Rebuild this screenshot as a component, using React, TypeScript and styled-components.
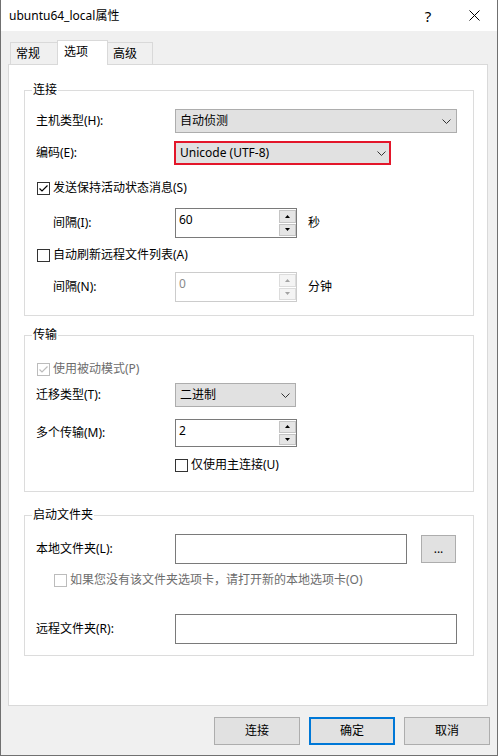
import { FC, ReactNode } from "react";
import styled, { createGlobalStyle } from "styled-components";

const GlobalStyle = createGlobalStyle`
  html, body {
    margin: 0;
    padding: 0;
    background: #f0f0f0;
  }
  body {
    font-family: "Noto Sans", "Noto Sans CJK SC", sans-serif;
    font-size: 12px;
    line-height: 16px;
    color: #000;
  }
  * {
    box-sizing: border-box;
  }
`;

const Chevron = () => (
  <svg width="9" height="5" viewBox="0 0 9 5">
    <polyline points="0.5,0.5 4.5,4.5 8.5,0.5" fill="none" stroke="#333" strokeWidth="1" />
  </svg>
);

const Arrow: FC<{ up?: boolean; disabled?: boolean }> = ({ up, disabled }) => (
  <svg width="5" height="3" viewBox="0 0 5 3">
    <polygon
      points={up ? "0,3 2.5,0 5,3" : "0,0 5,0 2.5,3"}
      fill={disabled ? "#a3a3a3" : "#000"}
    />
  </svg>
);

const Check: FC<{ checked?: boolean; disabled?: boolean }> = ({
  checked,
  disabled,
}) => (
  <CheckBox $disabled={disabled}>
    {checked && (
      <svg width="11" height="11" viewBox="0 0 11 11">
        <polyline
          points="1.5,5.5 4,8 9.5,2.5"
          fill="none"
          stroke={disabled ? "#bcbcbc" : "#000"}
          strokeWidth="1.2"
        />
      </svg>
    )}
  </CheckBox>
);

const Spin: FC<{ value: string; disabled?: boolean }> = ({ value, disabled }) => (
  <SpinBox $disabled={disabled}>
    <SpinValue $disabled={disabled}>{value}</SpinValue>
    <SpinButtons>
      <SpinButton $disabled={disabled}>
        <Arrow up disabled={disabled} />
      </SpinButton>
      <SpinButton $disabled={disabled}>
        <Arrow disabled={disabled} />
      </SpinButton>
    </SpinButtons>
  </SpinBox>
);

const Combo: FC<{ width: number; highlight?: boolean; children: ReactNode }> = ({
  width,
  highlight,
  children,
}) => (
  <Select $width={width} $highlight={highlight}>
    <span>{children}</span>
    <Chevron />
  </Select>
);

export default function App() {
  return (
    <>
      <GlobalStyle />
      <Window>
        <TitleBar>
          <TitleText>ubuntu64_local属性</TitleText>
          <CaptionButton>?</CaptionButton>
          <CaptionButton>
            <svg width="11" height="11" viewBox="0 0 11 11">
              <path d="M0.5,0.5 L10.5,10.5 M10.5,0.5 L0.5,10.5" stroke="#000" strokeWidth="1" />
            </svg>
          </CaptionButton>
        </TitleBar>

        <Body>
          <TabStrip>
            <Tab $width={48}>常规</Tab>
            <Tab $width={51} $active>
              选项
            </Tab>
            <Tab $width={46}>高级</Tab>
          </TabStrip>

          <Panel>
            <Group $mt={25} $pb={13}>
              <GroupTitle>连接</GroupTitle>
              <Row $mt={18} $h={24}>
                <Label>主机类型(H):</Label>
                <Combo width={282}>自动侦测</Combo>
              </Row>
              <Row $mt={8} $h={24}>
                <Label>编码(E):</Label>
                <Combo width={217} highlight>
                  Unicode (UTF-8)
                </Combo>
              </Row>
              <CheckRow $mt={13} $indent={1}>
                <Check checked />
                <CheckText>发送保持活动状态消息(S)</CheckText>
              </CheckRow>
              <Row $mt={10} $h={30}>
                <Label $indent={17}>间隔(I):</Label>
                <Spin value="60" />
                <Unit>秒</Unit>
              </Row>
              <CheckRow $mt={7} $indent={1}>
                <Check />
                <CheckText>自动刷新远程文件列表(A)</CheckText>
              </CheckRow>
              <Row $mt={7} $h={30}>
                <Label $indent={17}>间隔(N):</Label>
                <Spin value="0" disabled />
                <Unit>分钟</Unit>
              </Row>
            </Group>

            <Group $mt={19} $pb={16}>
              <GroupTitle>传输</GroupTitle>
              <CheckRow $mt={23} $indent={1}>
                <Check checked disabled />
                <CheckText $disabled>使用被动模式(P)</CheckText>
              </CheckRow>
              <Row $mt={4} $h={24}>
                <Label>迁移类型(T):</Label>
                <Combo width={121}>二进制</Combo>
              </Row>
              <Row $mt={12} $h={28}>
                <Label>多个传输(M):</Label>
                <Spin value="2" />
              </Row>
              <CheckRow $mt={8} $indent={139}>
                <Check />
                <CheckText>仅使用主连接(U)</CheckText>
              </CheckRow>
            </Group>

            <Group $mt={23} $pb={11}>
              <GroupTitle>启动文件夹</GroupTitle>
              <Row $mt={18} $h={30}>
                <Label>本地文件夹(L):</Label>
                <TextBox $width={232} />
                <BrowseButton>...</BrowseButton>
              </Row>
              <CheckRow $mt={6} $indent={18}>
                <Check disabled />
                <CheckText $disabled>如果您没有该文件夹选项卡，请打开新的本地选项卡(O)</CheckText>
              </CheckRow>
              <Row $mt={24} $h={30}>
                <Label>远程文件夹(R):</Label>
                <TextBox $width={282} />
              </Row>
            </Group>
          </Panel>

          <ButtonBar>
            <DialogButton>连接</DialogButton>
            <DialogButton $default>确定</DialogButton>
            <DialogButton>取消</DialogButton>
          </ButtonBar>
        </Body>
      </Window>
    </>
  );
}

const Window = styled.div`
  width: 498px;
  height: 756px;
  display: flex;
  flex-direction: column;
  background: #f0f0f0;
  border: 1px solid #707070;
  border-top: none;
`;

const TitleBar = styled.div`
  height: 31px;
  display: flex;
  align-items: center;
  background: #fff;
  padding-left: 8px;
`;

const TitleText = styled.div`
  margin-right: auto;
  font-size: 12px;
`;

const CaptionButton = styled.div`
  width: 46px;
  height: 31px;
  display: flex;
  align-items: center;
  justify-content: center;
  font-size: 15px;
`;

const Body = styled.div`
  flex: 1;
  padding: 9px 7px 0 7px;
`;

const TabStrip = styled.div`
  display: flex;
  align-items: flex-end;
  height: 24px;
  padding-left: 2px;
`;

const Tab = styled.div<{ $active?: boolean; $width: number }>`
  position: relative;
  width: ${({ $width }) => $width}px;
  height: ${({ $active }) => ($active ? 25 : 22)}px;
  margin-left: ${({ $active, $width }) => ($active || $width === 46 ? -1 : 0)}px;
  margin-bottom: ${({ $active }) => ($active ? -1 : 0)}px;
  padding: ${({ $active }) => ($active ? "3px 0 0 6px" : "3px 0 0 5px")};
  background: ${({ $active }) => ($active ? "#fff" : "#f0f0f0")};
  border: 1px solid #d9d9d9;
  border-bottom: none;
  z-index: ${({ $active }) => ($active ? 1 : 0)};
`;

const Panel = styled.div`
  width: 480px;
  background: #fff;
  border: 1px solid #d9d9d9;
  padding: 0 13px 49px 15px;
`;

const Group = styled.div<{ $mt: number; $pb: number }>`
  position: relative;
  margin-top: ${({ $mt }) => $mt}px;
  padding: 0 16px ${({ $pb }) => $pb}px 11px;
  border: 1px solid #dcdcdc;
`;

const GroupTitle = styled.span`
  position: absolute;
  top: -9px;
  left: 7px;
  padding: 0 1px;
  background: #fff;
`;

const Row = styled.div<{ $mt: number; $h: number }>`
  display: flex;
  align-items: center;
  height: ${({ $h }) => $h}px;
  margin-top: ${({ $mt }) => $mt}px;
`;

const Label = styled.div<{ $indent?: number }>`
  flex: none;
  width: 139px;
  padding-left: ${({ $indent }) => $indent ?? 0}px;
`;

const Select = styled.div<{ $width: number; $highlight?: boolean }>`
  display: flex;
  align-items: center;
  justify-content: space-between;
  width: ${({ $width }) => $width}px;
  height: 24px;
  margin-left: ${({ $highlight }) => ($highlight ? -1 : 0)}px;
  padding: ${({ $highlight }) => ($highlight ? "0 3px 0 4px" : "0 5px 0 4px")};
  background: #e1e1e1;
  border: ${({ $highlight }) => ($highlight ? "2px solid #e3162a" : "1px solid #adadad")};
`;

const SpinBox = styled.div<{ $disabled?: boolean }>`
  display: flex;
  width: 122px;
  height: 100%;
  background: #fff;
  border: 1px solid ${({ $disabled }) => ($disabled ? "#cccccc" : "#7a7a7a")};
`;

const SpinValue = styled.div<{ $disabled?: boolean }>`
  flex: 1;
  padding: 3px 3px 0;
  color: ${({ $disabled }) => ($disabled ? "#8a8a8a" : "#000")};
`;

const SpinButtons = styled.div`
  display: flex;
  flex-direction: column;
  gap: 1px;
  width: 17px;
  padding: 1px 0 1px;
`;

const SpinButton = styled.div<{ $disabled?: boolean }>`
  flex: 1;
  display: flex;
  align-items: center;
  justify-content: center;
  background: ${({ $disabled }) => ($disabled ? "#f4f4f4" : "#e5e5e5")};
  border: 1px solid ${({ $disabled }) => ($disabled ? "#dcdcdc" : "#c4c4c4")};
`;

const Unit = styled.span`
  margin-left: 11px;
`;

const CheckRow = styled.div<{ $mt: number; $indent: number }>`
  display: flex;
  align-items: center;
  gap: 3px;
  height: 20px;
  margin-top: ${({ $mt }) => $mt}px;
  padding-left: ${({ $indent }) => $indent}px;
`;

const CheckBox = styled.div<{ $disabled?: boolean }>`
  flex: none;
  width: 13px;
  height: 13px;
  display: flex;
  align-items: center;
  justify-content: center;
  background: #fff;
  border: 1px solid ${({ $disabled }) => ($disabled ? "#bcbcbc" : "#333")};
`;

const CheckText = styled.span<{ $disabled?: boolean }>`
  color: ${({ $disabled }) => ($disabled ? "#6d6d6d" : "#000")};
  white-space: nowrap;
`;

const TextBox = styled.div<{ $width: number }>`
  width: ${({ $width }) => $width}px;
  height: 100%;
  background: #fff;
  border: 1px solid #7a7a7a;
`;

const BrowseButton = styled.div`
  width: 35px;
  height: 28px;
  margin-left: 14px;
  display: flex;
  align-items: center;
  justify-content: center;
  background: #e1e1e1;
  border: 1px solid #adadad;
`;

const ButtonBar = styled.div`
  display: flex;
  justify-content: flex-end;
  gap: 9px;
  margin-top: 11px;
`;

const DialogButton = styled.div<{ $default?: boolean }>`
  width: 86px;
  height: 28px;
  display: flex;
  align-items: center;
  justify-content: center;
  background: #e1e1e1;
  border: ${({ $default }) => ($default ? "2px solid #0078d7" : "1px solid #adadad")};
`;
